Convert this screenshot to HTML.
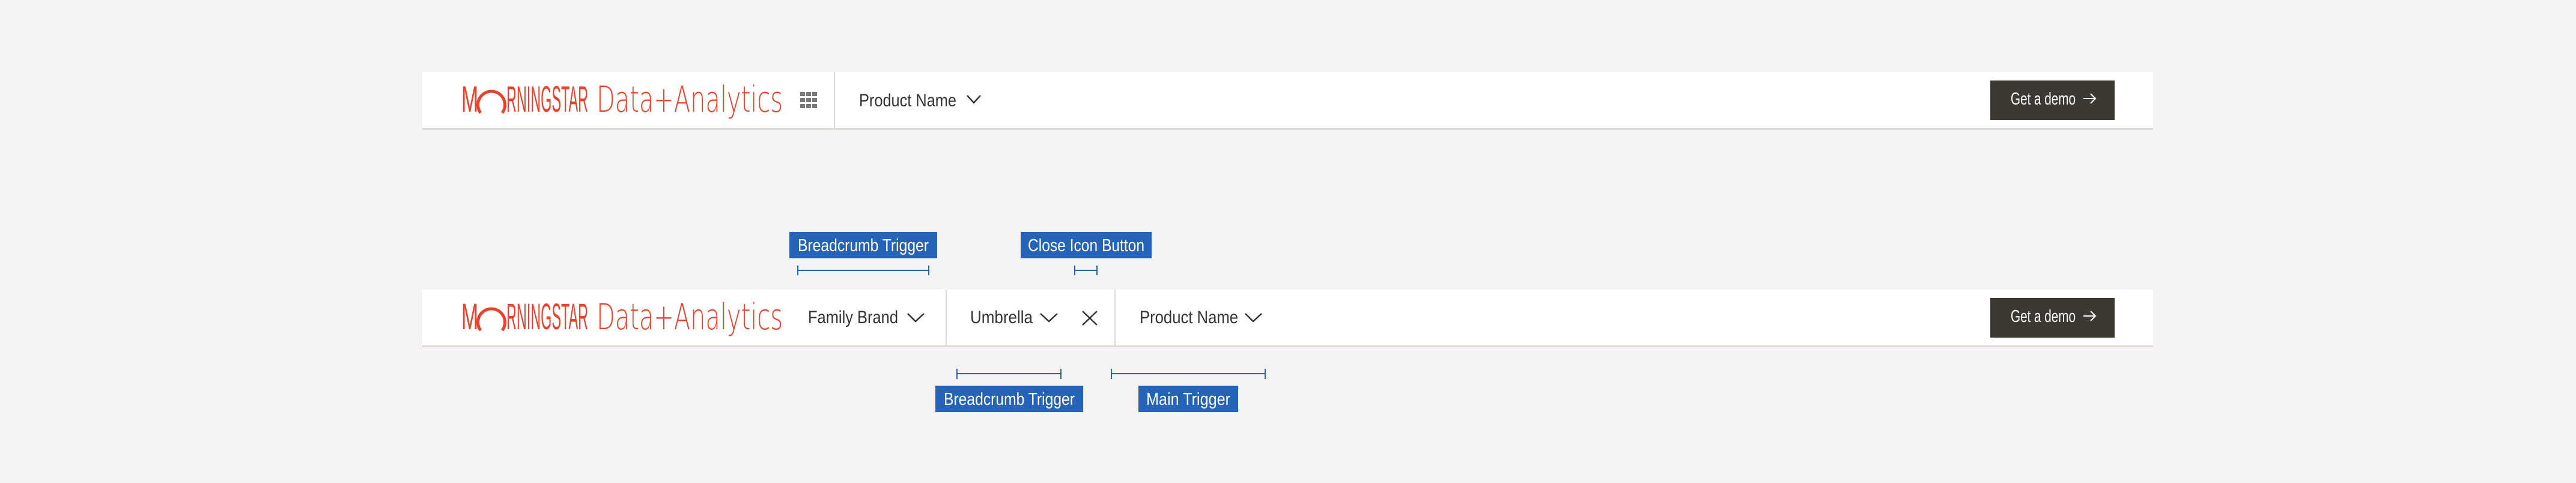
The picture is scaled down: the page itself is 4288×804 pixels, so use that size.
<!DOCTYPE html>
<html><head><meta charset="utf-8"><style>
html,body{margin:0;padding:0;background:#f3f3f3;}
svg{display:block;}
text{font-family:"Liberation Sans Narrow","Liberation Sans",sans-serif;}
</style></head><body>
<svg width="4288" height="804" viewBox="0 0 4288 804" xmlns="http://www.w3.org/2000/svg">
<rect width="4288" height="804" fill="#f3f3f3"/>
<defs>
<g id="logo">
<text x="768" y="186" font-size="61" fill="#e8412c" textLength="28" lengthAdjust="spacingAndGlyphs">M</text>
<path d="M800 188 A22.5 22.5 0 1 1 836 188" fill="none" stroke="#e8412c" stroke-width="5"/>
<text x="843" y="186" font-size="61" fill="#e8412c" textLength="136" lengthAdjust="spacingAndGlyphs">RNINGSTAR</text>
<text x="993" y="186" font-size="60" fill="#e8412c" textLength="310" lengthAdjust="spacingAndGlyphs" style="font-family:'DejaVu Sans ExtraLight','DejaVu Sans','Liberation Sans',sans-serif;font-weight:200">Data+Analytics</text>
</g>
<g id="btn">
<rect x="3313" y="134" width="207" height="66" fill="#3c3935"/>
<text x="3347" y="174" font-size="29" fill="#fff" textLength="108" lengthAdjust="spacingAndGlyphs">Get a demo</text>
<path d="M3468 164 H3488 M3480 156 L3488 164 L3480 172" fill="none" stroke="#fff" stroke-width="2"/>
</g>
</defs>

<rect x="703" y="120" width="2881" height="94" fill="#fff"/>
<rect x="703" y="213" width="2881" height="3" fill="#dcd9d5"/>
<use href="#logo"/>
<g fill="#777">
<rect x="1332" y="153" width="8" height="7"/><rect x="1342" y="153" width="8" height="7"/><rect x="1352" y="153" width="8" height="7"/>
<rect x="1332" y="163" width="8" height="7"/><rect x="1342" y="163" width="8" height="7"/><rect x="1352" y="163" width="8" height="7"/>
<rect x="1332" y="173" width="8" height="7"/><rect x="1342" y="173" width="8" height="7"/><rect x="1352" y="173" width="8" height="7"/>
</g>
<rect x="1388" y="120" width="2" height="94" fill="#dcd9d5"/>
<text x="1430" y="177" font-size="30" fill="#333" textLength="162" lengthAdjust="spacingAndGlyphs">Product Name</text>
<polyline points="1610,159 1621,171 1632,159" fill="none" stroke="#333" stroke-width="2.5"/>
<use href="#btn"/>

<g transform="translate(0,362)">
<rect x="703" y="120" width="2881" height="94" fill="#fff"/>
<rect x="703" y="213" width="2881" height="3" fill="#dcd9d5"/>
<use href="#logo"/>
<use href="#btn"/>
</g>
<text x="1345" y="538" font-size="30" fill="#333" textLength="150" lengthAdjust="spacingAndGlyphs">Family Brand</text>
<polyline points="1511,522 1524,535 1538,522" fill="none" stroke="#333" stroke-width="2.5"/>
<rect x="1574" y="482" width="2" height="94" fill="#dcd9d5"/>
<text x="1615" y="538" font-size="30" fill="#333" textLength="104" lengthAdjust="spacingAndGlyphs">Umbrella</text>
<polyline points="1732,522 1746,535 1760,522" fill="none" stroke="#333" stroke-width="2.5"/>
<path d="M1802 518 L1826 541 M1826 518 L1802 541" stroke="#333" stroke-width="2.5"/>
<rect x="1855" y="482" width="2" height="94" fill="#dcd9d5"/>
<text x="1897" y="538" font-size="30" fill="#333" textLength="164" lengthAdjust="spacingAndGlyphs">Product Name</text>
<polyline points="2073,522 2086,535 2100,522" fill="none" stroke="#333" stroke-width="2.5"/>

<g fill="#2463b7">
<rect x="1314" y="386" width="246" height="44"/>
<rect x="1699" y="386" width="218" height="44"/>
<rect x="1557" y="642" width="246" height="44"/>
<rect x="1895" y="642" width="166" height="44"/>
</g>
<g fill="#fff" font-size="29">
<text x="1328" y="418" textLength="218" lengthAdjust="spacingAndGlyphs">Breadcrumb Trigger</text>
<text x="1711" y="418" textLength="194" lengthAdjust="spacingAndGlyphs">Close Icon Button</text>
<text x="1571" y="674" textLength="218" lengthAdjust="spacingAndGlyphs">Breadcrumb Trigger</text>
<text x="1908" y="674" textLength="140" lengthAdjust="spacingAndGlyphs">Main Trigger</text>
</g>
<g stroke="#2463b7" stroke-width="2" fill="none">
<path d="M1328 450 H1546 M1328 442 V458 M1546 442 V458"/>
<path d="M1789 450 H1826 M1789 442 V458 M1826 442 V458"/>
<path d="M1593 622 H1766 M1593 614 V631 M1766 614 V631"/>
<path d="M1850 622 H2106 M1850 614 V631 M2106 614 V631"/>
</g>
</svg>
</body></html>
